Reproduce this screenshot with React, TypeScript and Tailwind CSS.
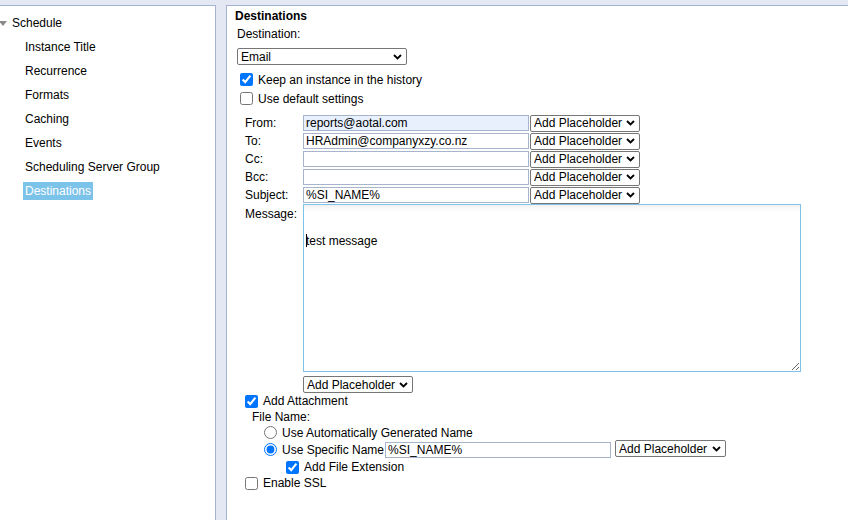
import React from "react";

const navItems = [
  "Instance Title",
  "Recurrence",
  "Formats",
  "Caching",
  "Events",
  "Scheduling Server Group",
  "Destinations",
];

function Chevron() {
  return (
    <svg
      className="pointer-events-none absolute right-[5px] top-1/2 -translate-y-1/2"
      width="9"
      height="6"
      viewBox="0 0 9 6"
    >
      <path d="M1 1l3.5 3.5L8 1" fill="none" stroke="#000" strokeWidth="1.8" />
    </svg>
  );
}

function Dropdown({ value, className }: { value: string; className: string }) {
  return (
    <div className={`relative shrink-0 ${className}`}>
      <select
        defaultValue={value}
        className="block w-full h-full appearance-none border border-[#767676] rounded-[2px] bg-white pl-[3px] pr-[16px] py-0 text-[12px] leading-[14px] text-black"
      >
        <option>{value}</option>
      </select>
      <Chevron />
    </div>
  );
}

function TextField({ value, className }: { value: string; className: string }) {
  return (
    <input
      type="text"
      defaultValue={value}
      className={`block shrink-0 border border-[#a7b5cc] px-[2px] py-0 text-[12px] leading-[14px] text-black ${className}`}
    />
  );
}

function CheckRow({
  label,
  checked,
  className,
}: {
  label: string;
  checked?: boolean;
  className: string;
}) {
  return (
    <label className={`flex items-center ${className}`}>
      <input type="checkbox" defaultChecked={checked} className="w-[13px] h-[13px] shrink-0" />
      <span className="ml-[5px]">{label}</span>
    </label>
  );
}

const fields = [
  { label: "From:", value: "reports@aotal.com", bg: "bg-[#e8f0fe]" },
  { label: "To:", value: "HRAdmin@companyxzy.co.nz", bg: "bg-white" },
  { label: "Cc:", value: "", bg: "bg-white" },
  { label: "Bcc:", value: "", bg: "bg-white" },
  { label: "Subject:", value: "%SI_NAME%", bg: "bg-white" },
];

export default function App() {
  return (
    <div
      className="w-[848px] h-[520px] overflow-hidden bg-[#e4e8f2] flex pt-[5px] text-[12px] text-black"
      style={{ fontFamily: '"Liberation Sans", Arial, sans-serif' }}
    >
      {/* left tree */}
      <div className="w-[216px] shrink-0 bg-white border-t border-r border-[#a4b3d1] pt-[5px]">
        <div className="h-[24px] flex items-center">
          <svg width="8" height="6" viewBox="0 0 8 6" className="-ml-[1px] mt-[1px]">
            <path d="M0 0h8L4 5z" fill="#8a8a8a" />
          </svg>
          <span className="ml-[5px]">Schedule</span>
        </div>
        {navItems.map((item) => (
          <div key={item} className="h-[24px] flex items-center pl-[23px]">
            {item === "Destinations" ? (
              <span className="bg-[#7cc3ea] text-white px-[2px] h-[18px] leading-[18px]">{item}</span>
            ) : (
              <span className="px-[2px]">{item}</span>
            )}
          </div>
        ))}
      </div>

      {/* right content */}
      <div className="flex-1 ml-[10px] bg-white border-t border-l border-[#a4b3d1] pl-[8px] flex flex-col">
        <div className="h-[20px] flex items-center font-bold">Destinations</div>
        <div className="h-[16px] flex items-center ml-[2px]">Destination:</div>
        <Dropdown value="Email" className="mt-[6px] ml-[2px] w-[170px] h-[17px]" />

        <CheckRow label="Keep an instance in the history" checked className="mt-[5px] ml-[5px] h-[19px]" />
        <CheckRow label="Use default settings" className="ml-[5px] h-[19px]" />

        <div className="mt-[6px] ml-[10px] flex flex-col">
          {fields.map((f) => (
            <div key={f.label} className="h-[18px] flex items-center">
              <span className="w-[58px] shrink-0">{f.label}</span>
              <TextField value={f.value} className={`w-[226px] h-[16px] ${f.bg}`} />
              <Dropdown value="Add Placeholder" className="ml-[1px] w-[110px] h-[17px]" />
            </div>
          ))}
          <div className="flex">
            <span className="w-[58px] shrink-0 mt-[1px]">Message:</span>
            <div className="relative">
              <textarea
                defaultValue="test message"
                className="block w-[498px] h-[168px] border border-[#7ec4ea] bg-white pt-[29px] pl-[2px] text-[12px] leading-[15px] text-black shadow-[inset_0_8px_6px_-6px_rgba(0,0,0,0.08)] resize"
              />
              <span className="absolute left-[3px] top-[30px] w-px h-[13px] bg-black" />
            </div>
          </div>
          <div className="flex mt-[4px]">
            <div className="w-[58px] shrink-0" />
            <Dropdown value="Add Placeholder" className="w-[110px] h-[17px]" />
          </div>
        </div>

        <CheckRow label="Add Attachment" checked className="ml-[10px] h-[16px]" />
        <div className="h-[16px] flex items-center ml-[17px]">File Name:</div>
        <label className="h-[15px] flex items-center ml-[29px]">
          <input type="radio" name="fn" className="w-[13px] h-[13px]" />
          <span className="ml-[5px]">Use Automatically Generated Name</span>
        </label>
        <div className="h-[19px] flex items-center ml-[29px]">
          <label className="flex items-center">
            <input type="radio" name="fn" defaultChecked className="w-[13px] h-[13px]" />
            <span className="ml-[5px]">Use Specific Name</span>
          </label>
          <TextField value="%SI_NAME%" className="ml-[1px] w-[226px] h-[16px] bg-white" />
          <Dropdown value="Add Placeholder" className="ml-[4px] w-[111px] h-[17px] -mt-[2px]" />
        </div>
        <CheckRow label="Add File Extension" checked className="ml-[51px] h-[16px]" />
        <CheckRow label="Enable SSL" className="ml-[10px] h-[16px]" />
      </div>
    </div>
  );
}
